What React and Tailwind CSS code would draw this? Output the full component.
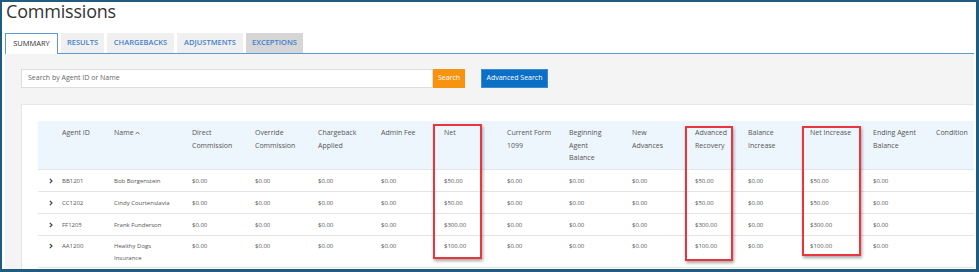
import React from 'react';

const columns = [
  { w: 24, lines: [''] },
  { w: 52, lines: ['Agent ID'] },
  { w: 78, lines: ['Name'], sort: true },
  { w: 63, lines: ['Direct', 'Commission'] },
  { w: 63, lines: ['Override', 'Commission'] },
  { w: 63, lines: ['Chargeback', 'Applied'] },
  { w: 63, lines: ['Admin Fee'] },
  { w: 63, lines: ['Net'] },
  { w: 62, lines: ['Current Form', '1099'] },
  { w: 63, lines: ['Beginning', 'Agent', 'Balance'] },
  { w: 63, lines: ['New', 'Advances'] },
  { w: 53, lines: ['Advanced', 'Recovery'] },
  { w: 62, lines: ['Balance', 'Increase'] },
  { w: 63, lines: ['Net Increase'] },
  { w: 63, lines: ['Ending Agent', 'Balance'] },
  { w: 63, lines: ['Condition'] },
];

const agents = [
  { id: 'BB1201', name: ['Bob Borgenstein'], net: '$50.00' },
  { id: 'CC1202', name: ['Cindy Courtenslavia'], net: '$50.00' },
  { id: 'FF1205', name: ['Frank Funderson'], net: '$300.00' },
  { id: 'AA1200', name: ['Healthy Dogs', 'Insurance'], net: '$100.00' },
];

const tabs = [
  { label: 'SUMMARY', w: 'w-[53px]', active: true },
  { label: 'RESULTS', w: 'w-[43px]' },
  { label: 'CHARGEBACKS', w: 'w-[67px]' },
  { label: 'ADJUSTMENTS', w: 'w-[66px]' },
  { label: 'EXCEPTIONS', w: 'w-[57px]', dark: true },
];

const Chevron = () => (
  <svg width="4" height="6" viewBox="0 0 4 6" className="inline-block">
    <path d="M0.8 0.8 L3 3 L0.8 5.2" fill="none" stroke="#444" strokeWidth="1.2" />
  </svg>
);

const SortUp = () => (
  <svg width="5" height="4" viewBox="0 0 5 4" className="inline-block ml-[1px] mb-[1px]">
    <path d="M0.6 3.2 L2.5 1 L4.4 3.2" fill="none" stroke="#666" strokeWidth="0.9" />
  </svg>
);

const Callout = ({ className }) => (
  <div className={`absolute border-2 border-[#e8363c] shadow-[1px_2px_3px_rgba(0,0,0,0.35)] pointer-events-none ${className}`} />
);

export default function App() {
  return (
    <div className="relative w-[979px] h-[272px] overflow-hidden bg-white border-l-2 border-t-2 border-r-[3px] border-b-[3px] border-[#1f5c80] font-['Open_Sans',sans-serif]">
      <div className="pl-[3px] pr-[2px] h-full flex flex-col">
        <h1 className="h-[18px] leading-[18px] text-[18px] text-[#333] pl-[1px] tracking-[-0.2px]">Commissions</h1>

        <div className="mt-[13px] flex gap-[3px] h-[21px] border-b border-[#5b9bd5]">
          {tabs.map(t => (
            <div
              key={t.label}
              className={`${t.w} flex items-center justify-center text-[7.5px] ${
                t.active
                  ? 'bg-white border border-b-0 border-[#5b9bd5] text-[#333] h-[21px] -mb-px relative'
                  : t.dark
                  ? 'bg-[#d6d6d6] text-[#3f7fcf] font-semibold h-[20px]'
                  : 'bg-[#f0f0f0] text-[#3f7fcf] font-semibold h-[20px]'
              }`}
            >
              {t.label}
            </div>
          ))}
        </div>

        <div className="flex-1 bg-[#f4f4f4] pt-[15px] pl-[16px]">
          <div className="flex items-center h-[19px]">
            <div className="w-[412px] h-[19px] bg-white border border-[#dedede] flex items-center pl-[6px] text-[7px] text-[#666]">
              Search by Agent ID or Name
            </div>
            <div className="w-[32px] h-[19px] bg-[#f7930f] text-white text-[7px] flex items-center justify-center">Search</div>
            <div className="ml-[16px] w-[67px] h-[19px] bg-[#0b6fc6] border border-[#3b8ad6] text-white text-[7px] flex items-center justify-center">
              Advanced Search
            </div>
          </div>

          <div className="mt-[16px] bg-white border-t border-l border-[#e6e6e6] pt-[16px] pl-[16px] h-[200px] overflow-hidden">
            <table className="table-fixed border-collapse w-[961px]">
              <colgroup>
                {columns.map((c, i) => (
                  <col key={i} style={{ width: c.w }} />
                ))}
              </colgroup>
              <thead>
                <tr className="bg-[#eef6fd] h-[48px]">
                  {columns.map((c, i) => (
                    <th key={i} className="align-top text-left font-normal text-[7px] leading-[12.5px] text-[#555] pt-[6px] p-0 whitespace-nowrap">
                      {c.lines.map((l, j) => (
                        <div key={j}>
                          {l}
                          {c.sort && <SortUp />}
                        </div>
                      ))}
                    </th>
                  ))}
                </tr>
              </thead>
              <tbody>
                {agents.map((a, r) => {
                  const last = r === agents.length - 1;
                  const cells = [
                    '$0.00', '$0.00', '$0.00', '$0.00', a.net, '$0.00', '$0.00', '$0.00', a.net, '$0.00', a.net, '$0.00', '',
                  ];
                  const td = `align-top p-0 text-[6px] leading-[12px] text-[#555] whitespace-nowrap ${last ? 'pt-[4px] pb-[3px]' : 'pt-[5px] pb-[4px]'}`;
                  return (
                    <tr key={a.id} className="border-t border-b border-[#e4e4e4]">
                      <td className={`${td} pl-[11px]`}>
                        <Chevron />
                      </td>
                      <td className={td}>{a.id}</td>
                      <td className={td}>
                        {a.name.map((n, j) => (
                          <div key={j}>{n}</div>
                        ))}
                      </td>
                      {cells.map((v, i) => (
                        <td key={i} className={td}>
                          {v}
                        </td>
                      ))}
                    </tr>
                  );
                })}
              </tbody>
            </table>
          </div>
        </div>
      </div>

      <Callout className="left-[431px] top-[122px] w-[49px] h-[135px]" />
      <Callout className="left-[683px] top-[124px] w-[48px] h-[135px]" />
      <Callout className="left-[800px] top-[124px] w-[59px] h-[130px]" />
    </div>
  );
}
